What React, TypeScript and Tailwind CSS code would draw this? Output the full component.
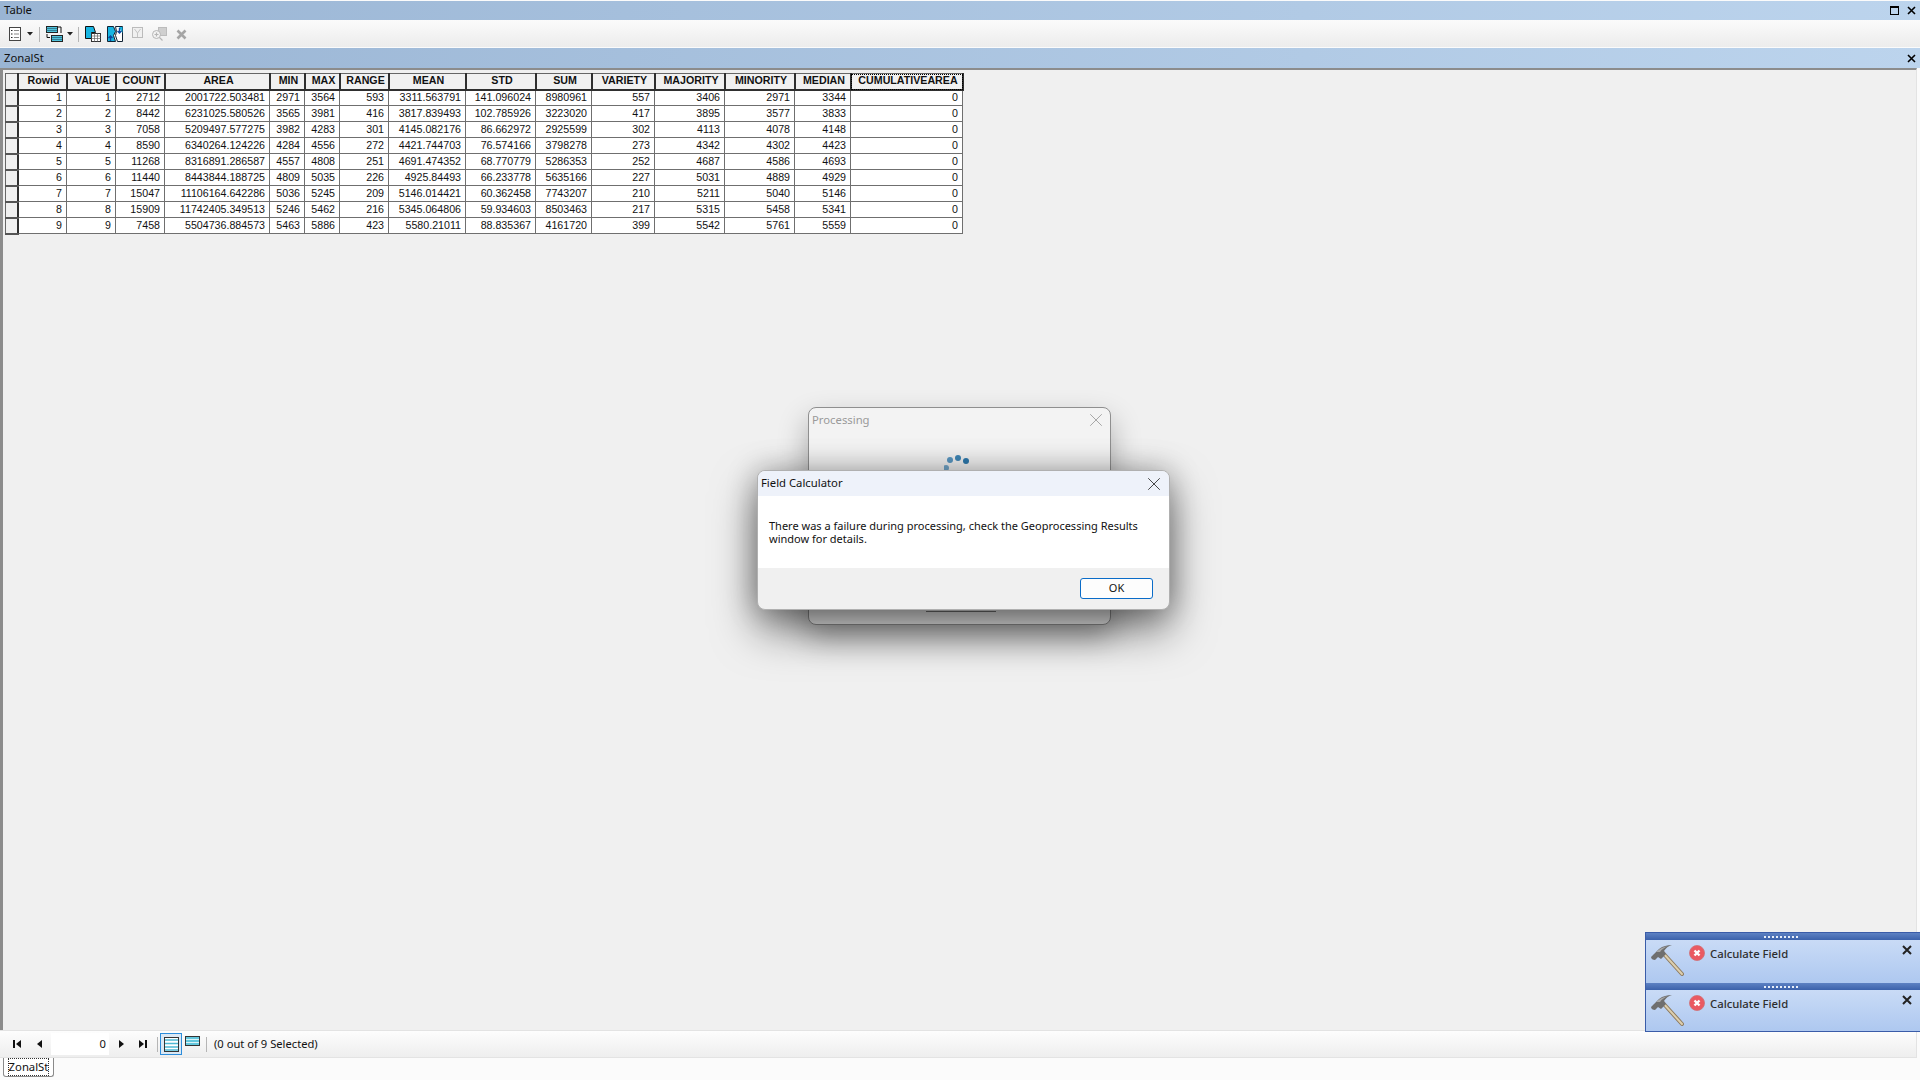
import { X } from "lucide-react";

const ui = "font-['Noto_Sans','Liberation_Sans',sans-serif]";

const columns = [
  { name: "Rowid", width: "w-[49px]" },
  { name: "VALUE", width: "w-[49px]" },
  { name: "COUNT", width: "w-[49px]" },
  { name: "AREA", width: "w-[105px]" },
  { name: "MIN", width: "w-[35px]" },
  { name: "MAX", width: "w-[35px]" },
  { name: "RANGE", width: "w-[49px]" },
  { name: "MEAN", width: "w-[77px]" },
  { name: "STD", width: "w-[70px]" },
  { name: "SUM", width: "w-[56px]" },
  { name: "VARIETY", width: "w-[63px]" },
  { name: "MAJORITY", width: "w-[70px]" },
  { name: "MINORITY", width: "w-[70px]" },
  { name: "MEDIAN", width: "w-[56px]" },
  { name: "CUMULATIVEAREA", width: "w-[112px]" },
];

const rows = [
  ["1", "1", "2712", "2001722.503481", "2971", "3564", "593", "3311.563791", "141.096024", "8980961", "557", "3406", "2971", "3344", "0"],
  ["2", "2", "8442", "6231025.580526", "3565", "3981", "416", "3817.839493", "102.785926", "3223020", "417", "3895", "3577", "3833", "0"],
  ["3", "3", "7058", "5209497.577275", "3982", "4283", "301", "4145.082176", "86.662972", "2925599", "302", "4113", "4078", "4148", "0"],
  ["4", "4", "8590", "6340264.124226", "4284", "4556", "272", "4421.744703", "76.574166", "3798278", "273", "4342", "4302", "4423", "0"],
  ["5", "5", "11268", "8316891.286587", "4557", "4808", "251", "4691.474352", "68.770779", "5286353", "252", "4687", "4586", "4693", "0"],
  ["6", "6", "11440", "8443844.188725", "4809", "5035", "226", "4925.84493", "66.233778", "5635166", "227", "5031", "4889", "4929", "0"],
  ["7", "7", "15047", "11106164.642286", "5036", "5245", "209", "5146.014421", "60.362458", "7743207", "210", "5211", "5040", "5146", "0"],
  ["8", "8", "15909", "11742405.349513", "5246", "5462", "216", "5345.064806", "59.934603", "8503463", "217", "5315", "5458", "5341", "0"],
  ["9", "9", "7458", "5504736.884573", "5463", "5886", "423", "5580.21011", "88.835367", "4161720", "399", "5542", "5761", "5559", "0"],
];

function Caret() {
  return (
    <svg width="6" height="4" viewBox="0 0 6 4" className="shrink-0">
      <path d="M0 0h6L3 3.5z" fill="#222" />
    </svg>
  );
}

function Sep() {
  return <div className="h-[15px] w-px shrink-0 bg-[#b5b5b5]" />;
}

function Toolbar() {
  return (
    <div className="flex h-[27px] items-center bg-gradient-to-b from-[#fbfbfb] to-[#ececec] pt-px pl-[9px]">
      <svg width="12" height="14" viewBox="0 0 12 14" className="shrink-0">
        <rect x="0.5" y="0.5" width="11" height="13" fill="#fff" stroke="#444" />
        <path d="M2 3.5h1.5M2 7h1.5M2 10.5h1.5" stroke="#222" />
        <path d="M5 3.5h5M5 7h5M5 10.5h5" stroke="#888" />
      </svg>
      <div className="ml-[6px]"><Caret /></div>
      <div className="ml-[6px]"><Sep /></div>
      <svg width="17" height="16" viewBox="0 0 17 16" className="ml-[6px] shrink-0">
        <rect x="0.5" y="0.5" width="11" height="6" fill="#4fc3dc" stroke="#222" />
        <rect x="5.5" y="9.5" width="11" height="6" fill="#4fc3dc" stroke="#222" />
        <path d="M0 2.5h11M0 4.5h11M6 11.5h10M6 13.5h10" stroke="#1c4f63" strokeWidth="0.6" />
        <path d="M1 8v3.5h3M12 1h3v6" fill="none" stroke="#111" />
      </svg>
      <div className="ml-[4px]"><Caret /></div>
      <div className="ml-[5px]"><Sep /></div>
      <svg width="16" height="16" viewBox="0 0 16 16" className="ml-[6px] shrink-0">
        <path d="M0.5 0.5h8l2 6h-4v6h-6z" fill="#17b5e2" stroke="#111" />
        <rect x="6.5" y="7.5" width="9" height="8" fill="#fff" stroke="#333" />
        <path d="M6.5 10h9M6.5 12.5h9M9.5 7.5v8M12.5 7.5v8" stroke="#666" strokeWidth="0.7" />
      </svg>
      <svg width="16" height="16" viewBox="0 0 16 16" className="ml-[6px] shrink-0">
        <path d="M0.5 0.5h6l2 5-2 4 2 6h-8z" fill="#17b5e2" stroke="#123" />
        <path d="M8.5 0.5h7v15h-5l-2-6 1-4z" fill="#fff" stroke="#123" />
        <path d="M12 1h3.5v6l-2-3z" fill="#17b5e2" />
        <path d="M3.5 15v-5M1.5 12l2-2 2 2" fill="none" stroke="#0b4aa0" strokeWidth="1.4" />
        <path d="M12.5 2v5M10.5 5l2 2 2-2" fill="none" stroke="#0b4aa0" strokeWidth="1.4" />
      </svg>
      <svg width="11" height="12" viewBox="0 0 11 12" className="mb-[3px] ml-[9px] shrink-0">
        <rect x="0.5" y="0.5" width="10" height="10" fill="#f0f0f0" stroke="#bbb" />
        <path d="M2.5 2l3 4 3-4M5.5 6v4" fill="none" stroke="#c4c4c4" />
      </svg>
      <svg width="16" height="15" viewBox="0 0 16 15" className="ml-[8px] shrink-0">
        <rect x="7.5" y="0.5" width="8" height="8" fill="#cfcfcf" stroke="#bcbcbc" />
        <circle cx="5.5" cy="7.5" r="4" fill="#f2f2f2" stroke="#b5b5b5" />
        <path d="M3.5 7.5h4M5.5 5.5v4M8.5 10.5l3 3" fill="none" stroke="#b5b5b5" strokeWidth="1.2" />
      </svg>
      <svg width="11" height="11" viewBox="0 0 11 11" className="ml-[9px] shrink-0">
        <path d="M1.5 1.5l8 8M9.5 1.5l-8 8" stroke="#a5a5a5" strokeWidth="2.6" />
      </svg>
    </div>
  );
}

function DataTable() {
  return (
    <table className="table-fixed border-collapse font-['Liberation_Sans',Arial,sans-serif] text-[10.67px] leading-none text-[#111]">
      <thead>
        <tr className="h-[16px]">
          <th className="w-[12px] border-t border-r-2 border-b-2 border-l border-t-[#666] border-r-[#2f2f2f] border-b-[#2f2f2f] border-l-[#666] bg-[#f0f0f0]" />
          {columns.map((col) => (
            <th
              className={`${col.width} border-t border-r-2 border-b-2 border-t-[#666] border-r-[#2f2f2f] border-b-[#2f2f2f] bg-[#f1f1f1] p-0 pb-[2px] pl-[3px] text-center font-bold whitespace-nowrap ${
                col.name === "CUMULATIVEAREA" ? "outline-1 -outline-offset-1 outline-dotted outline-black" : ""
              }`}
              key={col.name}
            >
              {col.name}
            </th>
          ))}
        </tr>
      </thead>
      <tbody>
        {rows.map((row) => (
          <tr className="h-[16px]" key={row[0]}>
            <td className="border-r-2 border-b-2 border-l border-r-[#2f2f2f] border-b-[#555] border-l-[#666] bg-[#f0f0f0]" />
            {row.map((value, i) => (
              <td
                className="border border-[#6f6f6f] bg-white p-0 pr-[4px] text-right whitespace-nowrap"
                key={columns[i].name}
              >
                {value}
              </td>
            ))}
          </tr>
        ))}
      </tbody>
    </table>
  );
}

function ViewIcon({ tall }: { tall: boolean }) {
  return tall ? (
    <svg width="15" height="15" viewBox="0 0 15 15">
      <rect x="0.5" y="0.5" width="14" height="14" fill="#fff" stroke="#333" />
      <path d="M1 3h13M1 6.5h13M1 10h13M1 13h13" stroke="#4fb9d4" strokeWidth="1.6" />
    </svg>
  ) : (
    <svg width="15" height="10" viewBox="0 0 15 10">
      <rect x="0.5" y="0.5" width="14" height="9" fill="#63c7dd" stroke="#333" />
      <path d="M1 3.5h13M1 6.5h13" stroke="#d8f3f8" />
    </svg>
  );
}

function NavBar() {
  return (
    <div className={`${ui} mr-[3px] flex h-[28px] shrink-0 items-center border-y border-r border-[#e3e3e3] bg-gradient-to-b from-[#fdfdfd] to-[#eeeeee] pl-[13px] text-[11.2px] text-[#111]`}>
      <svg width="9" height="8" viewBox="0 0 9 8" className="shrink-0">
        <path d="M0 0h2v8H0zM8 0v8L3 4z" fill="#111" />
      </svg>
      <svg width="5" height="8" viewBox="0 0 5 8" className="ml-[15px] shrink-0">
        <path d="M5 0v8L0 4z" fill="#111" />
      </svg>
      <div className="ml-[9px] flex h-[22px] w-[58px] items-center justify-end bg-white pr-[3px]">0</div>
      <svg width="5" height="8" viewBox="0 0 5 8" className="ml-[10px] shrink-0">
        <path d="M0 0v8l5-4z" fill="#111" />
      </svg>
      <svg width="9" height="8" viewBox="0 0 9 8" className="ml-[15px] shrink-0">
        <path d="M0 0v8l5-4zM6 0h2v8H6z" fill="#111" />
      </svg>
      <div className="ml-[9px]"><Sep /></div>
      <div className="ml-[2px] flex h-[22px] w-[22px] items-center justify-center border border-[#2c8ddb] bg-[#dbe8f4]">
        <ViewIcon tall />
      </div>
      <div className="mb-[6px] ml-[3px] flex"><ViewIcon tall={false} /></div>
      <div className="ml-[6px]"><Sep /></div>
      <span className="ml-[7px]">(0 out of 9 Selected)</span>
    </div>
  );
}

function Hammer() {
  return (
    <svg width="34" height="33" viewBox="0 0 34 33" className="shrink-0">
      <path d="M13 9l19 21" stroke="#8d7a5e" strokeWidth="4" strokeLinecap="round" />
      <path d="M13 9l19 21" stroke="#ddcfae" strokeWidth="2" strokeLinecap="round" />
      <path d="M1 13l3-3 5-5c4-3 8-4 13-4-4 1-6 3-8 6l2 3-5 5-3-2-3 3c-2 0-4-1-4-3z" fill="#6f6f6f" />
      <path d="M6 8c3-3 7-5 12-6-4 2-6 3-8 6z" fill="#a9a9a9" />
    </svg>
  );
}

function Notification({ bodyHeight }: { bodyHeight: string }) {
  return (
    <div className="flex flex-col">
      <div className="flex h-[7px] items-center justify-center gap-[2px] bg-gradient-to-b from-[#5d81c3] to-[#3c62ab] pr-[5px]">
        {[0, 1, 2, 3, 4, 5, 6, 7, 8].map((dot) => (
          <div className="size-[2px] bg-[#e8eef8]" key={dot} />
        ))}
      </div>
      <div className={`${bodyHeight} flex items-start bg-gradient-to-b from-[#c9dbf6] to-[#aec8f0] pt-[4px] pl-[4px]`}>
        <Hammer />
        <svg width="16" height="16" viewBox="0 0 16 16" className="mt-px ml-[5px] shrink-0">
          <circle cx="8" cy="8" r="7.5" fill="#ea5a62" />
          <circle cx="8" cy="8" r="7.5" fill="none" stroke="#cf6f75" strokeWidth="0.8" />
          <path d="M5.5 5.5l5 5M10.5 5.5l-5 5" stroke="#fff" strokeWidth="2.4" />
        </svg>
        <span className={`${ui} mt-[2px] ml-[5px] text-[11.3px] leading-[16px] font-medium text-[#2d2d2d]`}>
          Calculate Field
        </span>
        <svg width="10" height="10" viewBox="0 0 10 10" className="mt-px mr-[8px] ml-auto shrink-0">
          <path d="M1 1l8 8M9 1l-8 8" stroke="#222" strokeWidth="2" />
        </svg>
      </div>
    </div>
  );
}

function Dialogs() {
  return (
    <>
      {/* Processing dialog, sits behind the message box */}
      <div className={`${ui} absolute top-[407px] left-[808px] h-[218px] w-[303px] rounded-[8px] border border-[#8f8f8f] bg-[#f3f3f3] shadow-[0_14px_30px_rgba(0,0,0,0.3)]`}>
        <div className="flex h-[24px] items-center justify-between pr-[3px] pl-[3px] text-[11.3px] text-[#9a9a9a]">
          <span>Processing</span>
          <X size={22} strokeWidth={0.8} color="#8a8a8a" />
        </div>
        <svg width="30" height="20" viewBox="0 0 30 20" className="absolute top-[45px] left-[135px]">
          <circle cx="22" cy="8" r="3" fill="#2d79ad" />
          <circle cx="14" cy="5" r="3" fill="#3f86b6" />
          <circle cx="6" cy="7" r="3" fill="#5a97c2" />
          <circle cx="2" cy="15" r="3" fill="#74a8cc" />
        </svg>
        <div className="absolute top-[203px] left-[117px] h-px w-[70px] bg-[#777]" />
      </div>

      {/* Message box */}
      <div className={`${ui} absolute top-[470px] left-[757px] flex h-[140px] w-[413px] flex-col overflow-hidden rounded-[8px] border border-[#b0b0b0] bg-[#f0f0f0] text-[#111] shadow-[0_20px_44px_rgba(0,0,0,0.5),0_0_30px_rgba(0,0,0,0.28)]`}>
        <div className="flex h-[25px] shrink-0 items-center justify-between bg-[#eef2fa] pr-[4px] pl-[3px] text-[11.3px]">
          <span>Field Calculator</span>
          <X size={22} strokeWidth={0.9} color="#222" />
        </div>
        <div className="h-[72px] shrink-0 bg-white pt-[23px] pr-[20px] pl-[11px] text-[11px] leading-[13px]">
          There was a failure during processing, check the Geoprocessing Results window for details.
        </div>
        <div className="flex flex-1 justify-end pt-[10px] pr-[16px]">
          <div className="flex h-[21px] w-[73px] items-center justify-center rounded-[3px] border border-[#0a6cc8] bg-[#fdfdfd] text-[11px]">
            OK
          </div>
        </div>
      </div>
    </>
  );
}

export default function App() {
  return (
    <div className="relative flex h-[1080px] w-[1920px] flex-col overflow-hidden bg-[#fbfbfb]">
      {/* Window title */}
      <div className={`${ui} mt-px flex h-[19px] shrink-0 items-center justify-between bg-gradient-to-r from-[#9ab5d4] to-[#bcd4ed] pr-[4px] pl-[4px] text-[11.3px] text-[#111]`}>
        <span>Table</span>
        <div className="flex items-center gap-[8px]">
          <div className="size-[9px] border border-t-2 border-black" />
          <svg width="9" height="9" viewBox="0 0 9 9">
            <path d="M1 1l7 7M8 1l-7 7" stroke="#000" strokeWidth="1.6" />
          </svg>
        </div>
      </div>

      <Toolbar />

      {/* Table title */}
      <div className={`${ui} mt-px flex h-[20px] shrink-0 items-center justify-between bg-gradient-to-r from-[#9ab5d4] to-[#bcd4ed] pr-[4px] pl-[4px] text-[11.3px] text-[#111]`}>
        <span>ZonalSt</span>
        <svg width="9" height="9" viewBox="0 0 9 9">
          <path d="M1 1l7 7M8 1l-7 7" stroke="#000" strokeWidth="1.6" />
        </svg>
      </div>

      {/* Grid */}
      <div className="mr-[3px] flex-1 border-t-2 border-r border-l-[3px] border-t-[#8c8c8c] border-r-[#e3e3e3] border-l-[#8c8c8c] bg-[#f0f0f0] pt-[3px] pl-[2px]">
        <DataTable />
      </div>

      <NavBar />

      {/* Tab strip */}
      <div className="h-[22px] shrink-0 pl-[3px]">
        <div className={`${ui} flex h-[19px] w-[51px] items-center justify-center rounded-b-[3px] border border-t-0 border-[#8a8a8a] bg-white text-[11.3px] text-[#111]`}>
          <span className="outline-1 outline-dotted outline-[#333]">ZonalSt</span>
        </div>
      </div>

      <Dialogs />

      {/* Geoprocessing notifications */}
      <div className="absolute top-[932px] right-0 w-[275px] border border-r-0 border-[#3a5ca8] bg-[#3a5ca8]">
        <Notification bodyHeight="h-[43px]" />
        <Notification bodyHeight="h-[41px]" />
      </div>
    </div>
  );
}
